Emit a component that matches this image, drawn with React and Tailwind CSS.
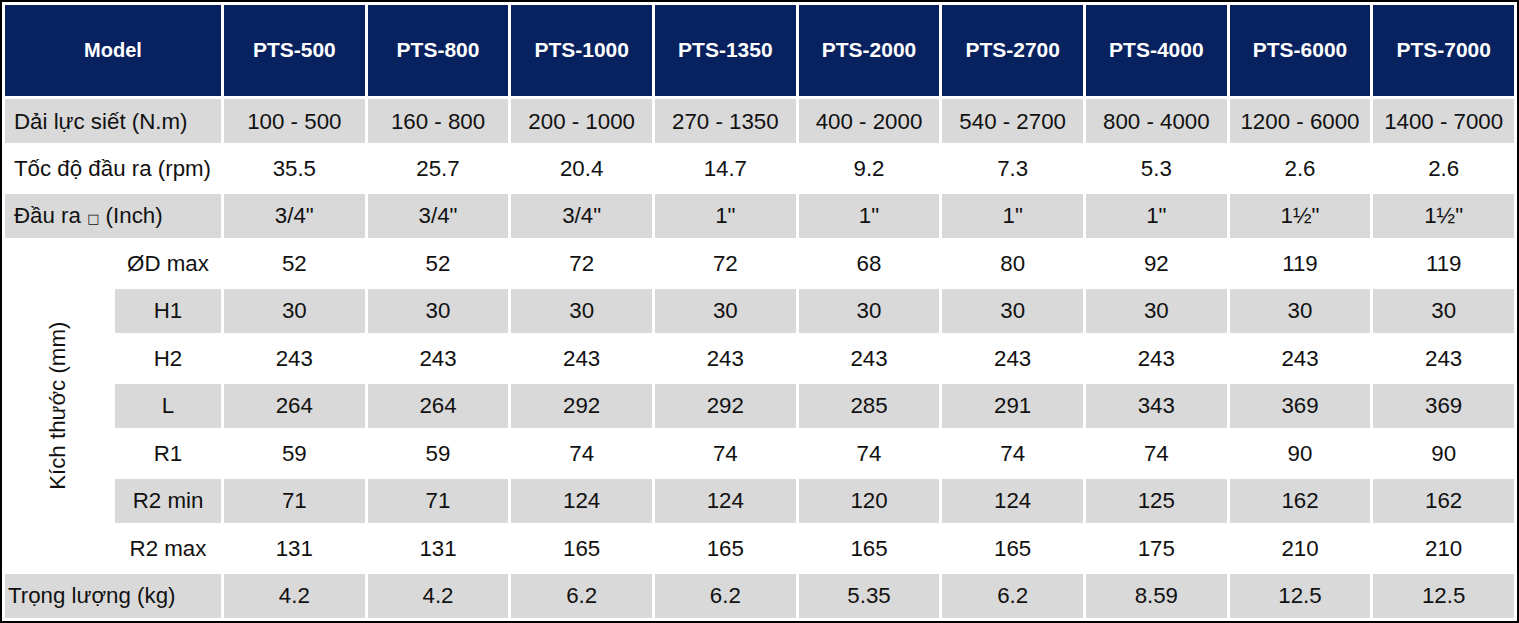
import React from 'react';

const models = ['PTS-500', 'PTS-800', 'PTS-1000', 'PTS-1350', 'PTS-2000', 'PTS-2700', 'PTS-4000', 'PTS-6000', 'PTS-7000'];

const topRows = [
  { label: 'Dải lực siết (N.m)', values: ['100 - 500', '160 - 800', '200 - 1000', '270 - 1350', '400 - 2000', '540 - 2700', '800 - 4000', '1200 - 6000', '1400 - 7000'], gray: true },
  { label: 'Tốc độ đầu ra (rpm)', values: ['35.5', '25.7', '20.4', '14.7', '9.2', '7.3', '5.3', '2.6', '2.6'], gray: false },
  { label: 'box', values: ['3/4"', '3/4"', '3/4"', '1"', '1"', '1"', '1"', '1½"', '1½"'], gray: true },
];

const sizeRows = [
  { label: 'ØD max', values: ['52', '52', '72', '72', '68', '80', '92', '119', '119'], gray: false },
  { label: 'H1', values: ['30', '30', '30', '30', '30', '30', '30', '30', '30'], gray: true },
  { label: 'H2', values: ['243', '243', '243', '243', '243', '243', '243', '243', '243'], gray: false },
  { label: 'L', values: ['264', '264', '292', '292', '285', '291', '343', '369', '369'], gray: true },
  { label: 'R1', values: ['59', '59', '74', '74', '74', '74', '74', '90', '90'], gray: false },
  { label: 'R2 min', values: ['71', '71', '124', '124', '120', '124', '125', '162', '162'], gray: true },
  { label: 'R2 max', values: ['131', '131', '165', '165', '165', '165', '175', '210', '210'], gray: false },
];

const weights = ['4.2', '4.2', '6.2', '6.2', '5.35', '6.2', '8.59', '12.5', '12.5'];

const cellBg = (gray) => (gray ? 'bg-[#d9d9d9]' : 'bg-white');

const ValueCells = ({ values, gray }) =>
  values.map((v, i) => (
    <div key={i} className={`flex items-center justify-center ${cellBg(gray)}`}>
      {v}
    </div>
  ));

const App = () => {
  return (
    <div className="w-[1519px] h-[623px] border-2 border-black bg-white p-[3px] text-[22.3px] text-[#111] font-['Liberation_Sans',Arial,sans-serif]">
      <div className="grid h-full grid-cols-[107px_106px_repeat(9,1fr)] grid-rows-[91px_repeat(11,1fr)] gap-[3px]">
        {/* header */}
        <div className="col-span-2 flex items-center justify-center pb-[2px] bg-[#08215f] text-[20px] font-bold text-white">
          Model
        </div>
        {models.map((m) => (
          <div key={m} className="flex items-center justify-center pb-[2px] bg-[#08215f] text-[21px] font-bold text-white">
            {m}
          </div>
        ))}

        {topRows.map((row, idx) => (
          <React.Fragment key={idx}>
            <div className={`col-span-2 flex items-center pl-[9px] whitespace-nowrap ${cellBg(row.gray)}`}>
              {row.label === 'box' ? (
                <span>
                  Đầu ra <span className="text-[13px] font-['DejaVu_Sans',sans-serif]">□</span> (Inch)
                </span>
              ) : (
                row.label
              )}
            </div>
            <ValueCells values={row.values} gray={row.gray} />
          </React.Fragment>
        ))}

        {sizeRows.map((row, idx) => (
          <React.Fragment key={row.label}>
            {idx === 0 && (
              <div className="col-start-1 row-span-7 flex items-center justify-center bg-white">
                <span className="-rotate-90 whitespace-nowrap">Kích thước (mm)</span>
              </div>
            )}
            <div className={`col-start-2 flex items-center justify-center ${cellBg(row.gray)}`}>
              {row.label}
            </div>
            <ValueCells values={row.values} gray={row.gray} />
          </React.Fragment>
        ))}

        <div className="col-span-2 flex items-center pl-[3px] whitespace-nowrap bg-[#d9d9d9]">
          Trọng lượng (kg)
        </div>
        <ValueCells values={weights} gray />
      </div>
    </div>
  );
};

export default App;
